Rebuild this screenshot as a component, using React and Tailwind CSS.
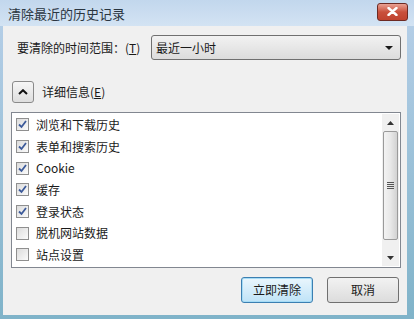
import React from 'react';

const items = [
  { label: '浏览和下载历史', checked: true },
  { label: '表单和搜索历史', checked: true },
  { label: 'Cookie', checked: true },
  { label: '缓存', checked: true },
  { label: '登录状态', checked: true },
  { label: '脱机网站数据', checked: false },
  { label: '站点设置', checked: false },
];

function CheckBox({ checked }) {
  return (
    <div className="w-[13px] h-[13px] border border-[#8f8f8f] bg-gradient-to-br from-[#dcdcdc] to-[#fbfbfb] flex items-center justify-center shrink-0">
      {checked && (
        <svg width="9" height="9" viewBox="0 0 9 9">
          <path d="M1 4.5 L3.5 7 L8 1" fill="none" stroke="#3c5a9a" strokeWidth="1.8" />
        </svg>
      )}
    </div>
  );
}

export default function App() {
  return (
    <div
      className="w-[414px] h-[319px] bg-gradient-to-b from-[#b8d0e9] to-[#7fb3c9] flex flex-col overflow-hidden"
      style={{ fontFamily: '"Noto Sans CJK SC", "Noto Sans", sans-serif' }}
    >
      {/* title bar */}
      <div className="h-[26px] shrink-0 flex items-center justify-between pl-[8px] pr-[6px] bg-gradient-to-b from-[#c2d7ed] to-[#d3e3f3]">
        <span className="text-[13px] text-[#2a3540] leading-none">清除最近的历史记录</span>
        <div className="w-[31px] h-[18px] rounded-[3px] border border-[#6d2a23] bg-gradient-to-b from-[#e8a093] via-[#c9503c] to-[#c0432f] flex items-center justify-center -mt-[3px]">
          <svg width="11" height="9" viewBox="0 0 11 9">
            <path d="M1.5 1 L9.5 8 M9.5 1 L1.5 8" stroke="#fff" strokeWidth="2.4" strokeLinecap="round" />
          </svg>
        </div>
      </div>

      {/* client area */}
      <div className="flex-1 ml-[3px] mr-[7px] mb-[4px] bg-[#f0f0f0] flex flex-col pl-[8px] pr-[6px] pt-[9px] text-[12px] text-[#1a1a1a]">
        <div className="flex items-center h-[25px]">
          <span className="ml-[6px] w-[133px]">
            要清除的时间范围：(<span className="underline">T</span>)
          </span>
          <div className="ml-[1px] flex-1 h-[25px] rounded-[3px] border border-[#707070] bg-gradient-to-b from-[#f2f2f2] to-[#dcdcdc] flex items-center justify-between pl-[4px] pr-[7px]">
            <span>最近一小时</span>
            <svg width="8" height="4" viewBox="0 0 8 4">
              <path d="M0 0 L8 0 L4 4 Z" fill="#1a1a1a" />
            </svg>
          </div>
        </div>

        <div className="flex items-center mt-[21px] h-[22px]">
          <div className="ml-[1px] w-[22px] h-[22px] rounded-[3px] border border-[#8a8a8a] bg-gradient-to-b from-[#f6f6f6] to-[#dedede] flex items-center justify-center">
            <svg width="10" height="6" viewBox="0 0 10 6">
              <path d="M1 5 L5 1.2 L9 5" fill="none" stroke="#111" strokeWidth="2" />
            </svg>
          </div>
          <span className="ml-[8px]">
            详细信息(<span className="underline">E</span>)
          </span>
        </div>

        <div className="mt-[9px] h-[156px] border border-[#828790] bg-white flex">
          <div className="flex-1 flex flex-col pt-[1px]">
            {items.map((it) => (
              <div key={it.label} className="h-[21.7px] flex items-center pl-[4px] gap-[7px]">
                <CheckBox checked={it.checked} />
                <span className="text-[12px]">{it.label}</span>
              </div>
            ))}
          </div>
          <div className="w-[17px] mr-[1px] my-[1px] bg-[#f0f0f0] flex flex-col items-center">
            <div className="h-[17px] w-full flex items-center justify-center">
              <svg width="7" height="4" viewBox="0 0 7 4">
                <path d="M0 4 L7 4 L3.5 0 Z" fill="#333" />
              </svg>
            </div>
            <div className="w-[15px] h-[109px] rounded-[2px] border border-[#9a9a9a] bg-gradient-to-r from-[#f3f3f3] via-[#e8e8e8] to-[#d2d2d2] flex flex-col items-center justify-center gap-[1px]">
              <div className="w-[7px] h-[1px] bg-[#555]" />
              <div className="w-[7px] h-[1px] bg-[#555]" />
              <div className="w-[7px] h-[1px] bg-[#555]" />
              <div className="w-[7px] h-[1px] bg-[#555]" />
            </div>
            <div className="flex-1" />
            <div className="h-[17px] w-full flex items-center justify-center">
              <svg width="7" height="4" viewBox="0 0 7 4">
                <path d="M0 0 L7 0 L3.5 4 Z" fill="#333" />
              </svg>
            </div>
          </div>
        </div>

        <div className="flex justify-end gap-[14px] mt-[9px] mr-[2px]">
          <div className="w-[72px] h-[26px] rounded-[3px] border border-[#3c7fb1] bg-gradient-to-b from-[#eaf6fd] to-[#bfe3f7] shadow-[inset_0_0_0_1px_#a6dcf6] flex items-center justify-center">
            立即清除
          </div>
          <div className="w-[72px] h-[26px] rounded-[3px] border border-[#707070] bg-gradient-to-b from-[#f2f2f2] to-[#dcdcdc] flex items-center justify-center">
            取消
          </div>
        </div>
      </div>
    </div>
  );
}
